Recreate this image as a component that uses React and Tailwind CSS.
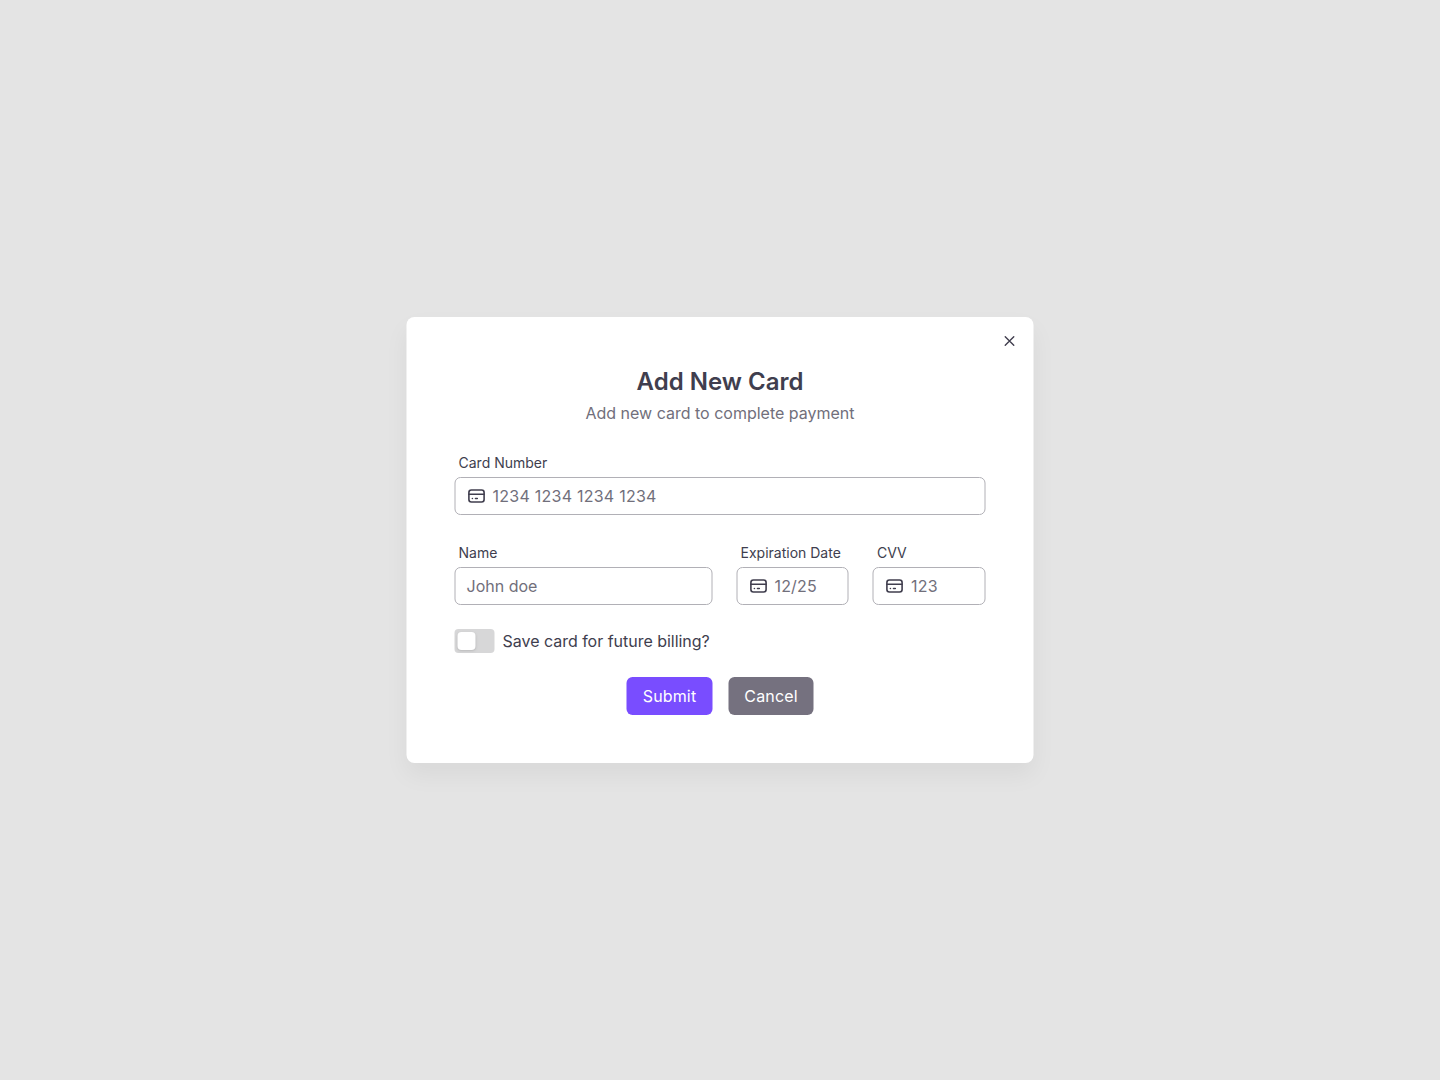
import React from "react";

function CardIcon() {
  return (
    <svg className="size-5 shrink-0" viewBox="0 0 20 20" fill="none" stroke="#403e4e" strokeWidth="1.6" strokeLinecap="round" strokeLinejoin="round">
      <rect x="2.4" y="4" width="15.2" height="12" rx="2.5" />
      <path d="M2.4 8.2h15.2" />
      <path d="M5.9 12.5h.01M9 12.5h1.8" />
    </svg>
  );
}

function Field({ label, value, icon, className, valueClass = "" }) {
  return (
    <div className={className}>
      <div className="mb-1 h-5 px-1 text-sm leading-5 whitespace-nowrap text-[#403e4e]">{label}</div>
      <div className="flex h-[38px] items-center rounded-md border border-[#b1b0b6] px-[11px] text-[#716f7b]">
        {icon && <span className="mr-1.5"><CardIcon /></span>}
        <span className={valueClass}>{value}</span>
      </div>
    </div>
  );
}

export default function App() {
  return (
    <main className="flex min-h-screen items-center justify-center bg-[#e4e4e4] font-['Inter',sans-serif] text-base leading-6 text-[#403e4e]">
      <section className="relative mr-px h-[446px] w-[627px] translate-x-[0.5px] rounded-lg bg-white px-12 pt-12 shadow-[0_12px_24px_rgba(0,0,0,0.05)]">
        <button aria-label="Close" className="absolute top-4 right-4">
          <svg className="size-4" viewBox="0 0 24 24" fill="none" stroke="#403e4e" strokeWidth="2.1" strokeLinecap="round" strokeLinejoin="round">
            <path d="M18.4 5.6L5.6 18.4M5.6 5.6l12.8 12.8" />
          </svg>
        </button>
        <h1 className="pt-px text-center text-2xl leading-8 font-semibold">Add New Card</h1>
        <p className="mt-[3px] text-center leading-6 text-[#716f7b]">Add new card to complete payment</p>
        <Field className="mt-7" label="Card Number" value="1234 1234 1234 1234" valueClass="tracking-[0.25px]" icon />
        <div className="mt-7 flex gap-6">
          <Field className="flex-1" label="Name" value="John doe" />
          <Field className="w-[112.4px]" label="Expiration Date" value="12/25" valueClass="tracking-[0.15px]" icon />
          <Field className="w-[112.6px]" label="CVV" value="123" valueClass="tracking-[0.3px]" icon />
        </div>
        <div className="mt-6 flex items-center gap-2">
          <div className="flex h-6 w-10 items-center rounded-[4px] bg-[#d7d7d8] px-[3px]">
            <div className="size-[18px] rounded-[4px] bg-white shadow-sm" />
          </div>
          <span className="tracking-[-0.02px]">Save card for future billing?</span>
        </div>
        <div className="mt-6 flex justify-center gap-4">
          <button className="h-[38px] w-[86px] rounded-md bg-[#794dff] font-normal tracking-[0.15px] text-white">Submit</button>
          <button className="h-[38px] w-[85px] rounded-md bg-[#75717f] font-normal tracking-[0.15px] text-white">Cancel</button>
        </div>
      </section>
    </main>
  );
}
